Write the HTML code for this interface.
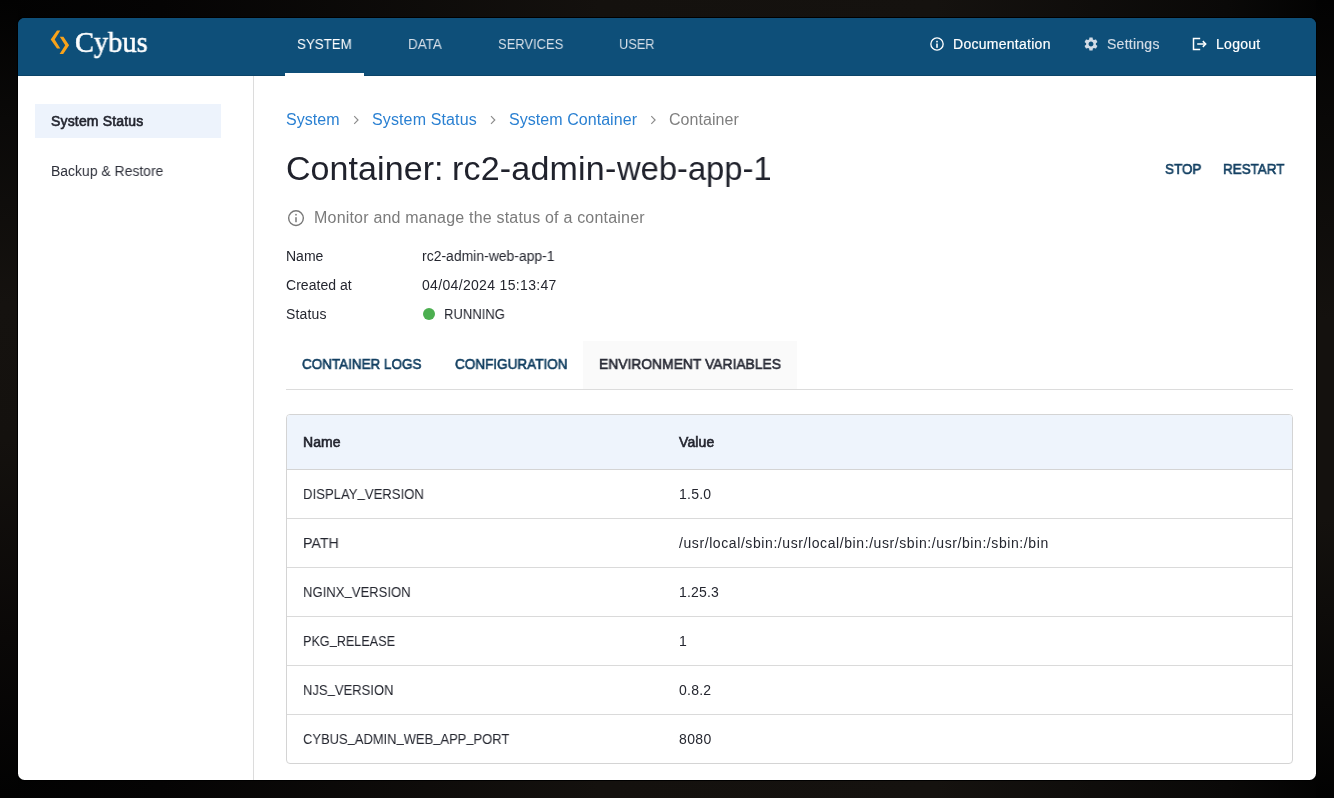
<!DOCTYPE html>
<html lang="en">
<head>
<meta charset="utf-8">
<title>Cybus Connectware - Container</title>
<style>
html,body{margin:0;padding:0;}
body{width:1334px;height:798px;overflow:hidden;position:relative;background:#050404;font-family:"Liberation Sans",sans-serif;}
.bg{position:absolute;left:0;top:0;width:1334px;height:798px;
 background:
  linear-gradient(90deg,#020202 0%,#050404 12%,#14110e 45%,#15120f 70%,#0a0908 92%,#020202 100%);}
.bgl{position:absolute;left:0;top:0;width:18px;height:798px;background:linear-gradient(180deg,#020202 0%,#0a0908 15%,#15120f 38%,#14110e 55%,#0a0807 80%,#020202 100%);}
.bgr{position:absolute;left:1316px;top:0;width:18px;height:798px;background:linear-gradient(180deg,#020202 0%,#090807 15%,#14110e 40%,#14110e 65%,#080706 88%,#020202 100%);}
.win{position:absolute;left:18px;top:18px;width:1298px;height:762px;background:linear-gradient(180deg,#0e4f79 0,#0e4f79 58px,#ffffff 58px,#ffffff 100%);border-radius:6.5px;overflow:hidden;box-shadow:0 0 0 1px #000;}
.hdr{position:absolute;left:0;top:0;width:1298px;height:58px;background:#0e4f79;}
.hdr:after{content:"";position:absolute;left:0;bottom:0;width:100%;height:1px;background:#0b4468;}
.ind{position:absolute;left:267px;top:55px;width:79px;height:3px;background:#ffffff;}
.side{position:absolute;left:235px;top:58px;width:1px;height:704px;background:#dcdcdc;}
.sel{position:absolute;left:17px;top:86px;width:186px;height:34px;background:#edf3fc;}
.tabbg{position:absolute;left:565px;top:323px;width:214px;height:48px;background:#fafafa;}
.tabline{position:absolute;left:268px;top:371px;width:1007px;height:1px;background:#dcdcdc;}
.tbl{position:absolute;left:268px;top:396px;width:1005px;height:348px;border:1px solid #d4d4d4;border-radius:4px;overflow:hidden;}
.thead{position:absolute;left:0;top:0;width:1005px;height:54px;background:#eef4fc;}
.rl{position:absolute;left:0;width:1005px;height:1px;background:#dadada;}
.dot{position:absolute;left:405px;top:290px;width:12px;height:12px;border-radius:50%;background:#4caf50;}
.t{position:absolute;white-space:nowrap;margin:0;padding:0;will-change:transform;transform-origin:0 50%;}
.m{-webkit-text-stroke:0.18px currentColor;}
.M{-webkit-text-stroke:0.6px currentColor;}
.L{-webkit-text-stroke:0.55px currentColor;}
.b{font-weight:bold;}
.u{position:relative;top:-2px;}
svg{position:absolute;overflow:visible;}
.lay{position:absolute;left:0;top:0;width:1334px;height:798px;}
</style>
</head>
<body>
<div class="bg"></div><div class="bgl"></div><div class="bgr"></div>
<div class="win">
  <div class="hdr"></div>
  <div class="ind"></div>
  <div class="side"></div>
  <div class="sel"></div>
  <div class="tabbg"></div>
  <div class="tabline"></div>
  <div class="dot"></div>
  <div class="tbl">
    <div class="thead"></div>
    <div class="rl" style="top:54px;background:#d4d4d4"></div>
    <div class="rl" style="top:103px"></div>
    <div class="rl" style="top:152px"></div>
    <div class="rl" style="top:201px"></div>
    <div class="rl" style="top:250px"></div>
    <div class="rl" style="top:299px"></div>
  </div>
</div>
<!-- icons: single overlay svg in page coordinates -->
<svg class="lay" width="1334" height="798" viewBox="0 0 1334 798">
  <!-- logo chevrons -->
  <polygon points="57.0,30.4 60.3,30.4 54.7,39.4 60.3,48.5 57.0,48.5 50.7,39.4" fill="#f9a31a"/>
  <polygon points="59.8,36.8 63.4,36.8 69.1,45.3 63.2,54.1 59.6,54.1 65.2,45.3" fill="#f9a31a"/>
  <!-- documentation info icon -->
  <g fill="none" stroke="#ffffff" stroke-width="1.35">
    <circle cx="937" cy="44" r="6.15"/>
  </g>
  <rect x="936.2" y="43.5" width="1.6" height="4.3" fill="#ffffff"/>
  <rect x="936.2" y="40.8" width="1.6" height="1.6" fill="#ffffff"/>
  <!-- settings gear -->
  <g transform="translate(1091,44) scale(0.68) translate(-12,-12)" fill="#d3dce6">
    <path d="M19.14 12.94c.04-.3.06-.61.06-.94 0-.32-.02-.64-.07-.94l2.03-1.58c.18-.14.23-.41.12-.61l-1.920-3.320c-.12-.22-.37-.29-.59-.22l-2.390.960c-.5-.38-1.030-.7-1.620-.94l-.36-2.540c-.04-.24-.24-.41-.48-.41h-3.840c-.24 0-.43.170-.47.410l-.36 2.540c-.59.240-1.130.570-1.620.940l-2.390-.960c-.22-.08-.47 0-.59.220L2.740 8.870c-.12.210-.08.470.12.610l2.030 1.580c-.05.300-.09.630-.09.940s.02.640.07.940l-2.030 1.580c-.18.140-.23.410-.12.610l1.920 3.320c.12.220.37.290.59.220l2.390-.96c.5.380 1.030.7 1.620.94l.36 2.540c.05.240.24.410.48.410h3.840c.24 0 .44-.17.470-.41l.36-2.540c.59-.24 1.130-.56 1.620-.94l2.390.96c.22.080.47 0 .59-.22l1.920-3.320c.12-.22.070-.47-.12-.61l-2.010-1.580zM12 15.600c-1.980 0-3.600-1.620-3.600-3.600s1.620-3.600 3.600-3.600 3.600 1.620 3.600 3.600-1.620 3.600-3.600 3.600z"/>
  </g>
  <!-- logout icon -->
  <g fill="none" stroke="#ffffff" stroke-width="1.5" stroke-linejoin="miter">
    <path d="M1200.2 38.5 H1193.5 V49.4 H1200.2"/>
    <path d="M1197.2 44 H1205.0"/>
    <path d="M1202.8 41.1 L1205.7 44 L1202.8 46.9"/>
  </g>
  <!-- breadcrumb chevrons -->
  <g fill="none" stroke="#8c8c8c" stroke-width="1.15">
    <path d="M354.2 116.2 L358.0 120 L354.2 123.8"/>
    <path d="M491.0 116.2 L494.8 120 L491.0 123.8"/>
    <path d="M651.3 116.2 L655.1 120 L651.3 123.8"/>
  </g>
  <!-- subtitle info icon -->
  <circle cx="296" cy="218.1" r="7.35" fill="none" stroke="#787878" stroke-width="1.4"/>
  <rect x="295.25" y="217.2" width="1.5" height="5" fill="#787878"/>
  <rect x="295.25" y="213.9" width="1.5" height="1.6" fill="#787878"/>
</svg>
<div class="t L" style='left:75.42px;top:23.70px;font-size:29px;line-height:36px;color:#ffffff;letter-spacing:0.000px;font-family:"Liberation Serif", serif;transform:scaleX(0.9819);'>Cybus</div>
<div class="t" style='left:297.28px;top:35.02px;font-size:14.5px;line-height:18px;color:#ffffff;letter-spacing:0.000px;transform:scaleX(0.9193);'>SYSTEM</div>
<div class="t" style='left:408.47px;top:35.02px;font-size:14.5px;line-height:18px;color:#d6dfe8;letter-spacing:0.000px;transform:scaleX(0.9286);'>DATA</div>
<div class="t" style='left:498.31px;top:35.02px;font-size:14.5px;line-height:18px;color:#d6dfe8;letter-spacing:0.000px;transform:scaleX(0.8930);'>SERVICES</div>
<div class="t" style='left:619.02px;top:35.02px;font-size:14.5px;line-height:18px;color:#d6dfe8;letter-spacing:0.000px;transform:scaleX(0.8816);'>USER</div>
<div class="t m" style='left:953.30px;top:34.81px;font-size:14px;line-height:18px;color:#ffffff;letter-spacing:0.275px;'>Documentation</div>
<div class="t m" style='left:1107.30px;top:34.81px;font-size:14px;line-height:18px;color:#d3dce6;letter-spacing:0.257px;'>Settings</div>
<div class="t m" style='left:1216.00px;top:34.81px;font-size:14px;line-height:18px;color:#ffffff;letter-spacing:0.280px;'>Logout</div>
<div class="t M" style='left:51.00px;top:111.70px;font-size:14px;line-height:18px;color:#23252f;letter-spacing:0.167px;'>System Status</div>
<div class="t" style='left:51.00px;top:161.81px;font-size:14px;line-height:18px;color:#2e303a;letter-spacing:0.000px;transform:scaleX(0.9955);'>Backup &amp; Restore</div>
<div class="t" style='left:286.00px;top:109.81px;font-size:16px;line-height:20px;color:#2a80d2;letter-spacing:0.060px;'>System</div>
<div class="t" style='left:372.00px;top:109.81px;font-size:16px;line-height:20px;color:#2a80d2;letter-spacing:0.125px;'>System Status</div>
<div class="t" style='left:509.10px;top:109.81px;font-size:16px;line-height:20px;color:#2a80d2;letter-spacing:0.053px;'>System Container</div>
<div class="t" style='left:668.80px;top:109.81px;font-size:16px;line-height:20px;color:#7f7f7f;letter-spacing:0.050px;'>Container</div>
<div class="t" style='left:286.00px;top:146.81px;font-size:34px;line-height:42px;color:#20222c;letter-spacing:0.067px;'>Container:</div>
<div class="t" style='left:452.30px;top:146.81px;font-size:34px;line-height:42px;color:#20222c;letter-spacing:0.200px;'>rc2-admin-</div>
<div class="t" style='left:617.20px;top:146.81px;font-size:34px;line-height:42px;color:#20222c;letter-spacing:0.000px;transform:scaleX(0.9623);'>web-app-1</div>
<div class="t" style='left:313.90px;top:207.81px;font-size:16px;line-height:20px;color:#7b7b7b;letter-spacing:0.200px;'>Monitor and manage the status of a container</div>
<div class="t M" style='left:1164.80px;top:160.01px;font-size:14.5px;line-height:18px;color:#123f61;letter-spacing:0.000px;transform:scaleX(0.9282);'>STOP</div>
<div class="t M" style='left:1222.87px;top:160.01px;font-size:14.5px;line-height:18px;color:#123f61;letter-spacing:0.000px;transform:scaleX(0.9262);'>RESTART</div>
<div class="t" style='left:286.00px;top:247.01px;font-size:14px;line-height:18px;color:#24262f;letter-spacing:0.000px;'>Name</div>
<div class="t" style='left:422.00px;top:247.01px;font-size:14px;line-height:18px;color:#24262f;letter-spacing:0.000px;transform:scaleX(0.9962);'>rc2-admin-web-app-1</div>
<div class="t" style='left:286.00px;top:276.01px;font-size:14px;line-height:18px;color:#24262f;letter-spacing:0.033px;'>Created at</div>
<div class="t" style='left:422.00px;top:276.01px;font-size:14px;line-height:18px;color:#24262f;letter-spacing:0.328px;'>04/04/2024 15:13:47</div>
<div class="t" style='left:286.00px;top:305.01px;font-size:14px;line-height:18px;color:#24262f;letter-spacing:0.180px;'>Status</div>
<div class="t" style='left:443.60px;top:305.00px;font-size:14.5px;line-height:18px;color:#24262f;letter-spacing:0.000px;transform:scaleX(0.8985);'>RUNNING</div>
<div class="t M" style='left:302.20px;top:355.21px;font-size:14.5px;line-height:18px;color:#123f61;letter-spacing:0.000px;transform:scaleX(0.9281);'>CONTAINER LOGS</div>
<div class="t M" style='left:454.50px;top:355.21px;font-size:14.5px;line-height:18px;color:#123f61;letter-spacing:0.000px;transform:scaleX(0.9333);'>CONFIGURATION</div>
<div class="t M" style='left:599.34px;top:355.21px;font-size:14.5px;line-height:18px;color:#2a2c37;letter-spacing:0.000px;transform:scaleX(0.9556);'>ENVIRONMENT VARIABLES</div>
<div class="t M" style='left:303.00px;top:433.11px;font-size:14px;line-height:18px;color:#23252f;letter-spacing:0.067px;'>Name</div>
<div class="t M" style='left:679.00px;top:433.11px;font-size:14px;line-height:18px;color:#23252f;letter-spacing:0.100px;'>Value</div>
<div class="t" style='left:303.09px;top:485.00px;font-size:14.5px;line-height:18px;color:#24262f;letter-spacing:0.000px;transform:scaleX(0.9053);'>DISPLAY<span class="u">_</span>VERSION</div>
<div class="t" style='left:679.00px;top:485.01px;font-size:14px;line-height:18px;color:#24262f;letter-spacing:0.250px;'>1.5.0</div>
<div class="t" style='left:303.02px;top:534.01px;font-size:14.5px;line-height:18px;color:#24262f;letter-spacing:0.000px;transform:scaleX(0.9794);'>PATH</div>
<div class="t" style='left:679.00px;top:534.01px;font-size:14px;line-height:18px;color:#24262f;letter-spacing:0.586px;'>/usr/local/sbin:/usr/local/bin:/usr/sbin:/usr/bin:/sbin:/bin</div>
<div class="t" style='left:303.10px;top:583.01px;font-size:14.5px;line-height:18px;color:#24262f;letter-spacing:0.000px;transform:scaleX(0.9026);'>NGINX<span class="u">_</span>VERSION</div>
<div class="t" style='left:679.00px;top:583.01px;font-size:14px;line-height:18px;color:#24262f;letter-spacing:0.160px;'>1.25.3</div>
<div class="t" style='left:303.13px;top:632.01px;font-size:14.5px;line-height:18px;color:#24262f;letter-spacing:0.000px;transform:scaleX(0.8712);'>PKG<span class="u">_</span>RELEASE</div>
<div class="t" style='left:679.00px;top:632.01px;font-size:14px;line-height:18px;color:#24262f;letter-spacing:0.000px;'>1</div>
<div class="t" style='left:303.10px;top:681.01px;font-size:14.5px;line-height:18px;color:#24262f;letter-spacing:0.000px;transform:scaleX(0.8980);'>NJS<span class="u">_</span>VERSION</div>
<div class="t" style='left:679.00px;top:681.01px;font-size:14px;line-height:18px;color:#24262f;letter-spacing:0.250px;'>0.8.2</div>
<div class="t" style='left:303.11px;top:730.01px;font-size:14.5px;line-height:18px;color:#24262f;letter-spacing:0.000px;transform:scaleX(0.8926);'>CYBUS<span class="u">_</span>ADMIN<span class="u">_</span>WEB<span class="u">_</span>APP<span class="u">_</span>PORT</div>
<div class="t" style='left:679.00px;top:730.01px;font-size:14px;line-height:18px;color:#24262f;letter-spacing:0.400px;'>8080</div>
</body>
</html>
